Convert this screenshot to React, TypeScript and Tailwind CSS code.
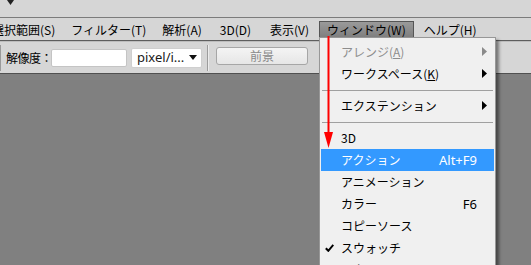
import React from 'react';

type Item =
  | { kind: 'sep' }
  | { kind: 'item'; label: React.ReactNode; shortcut?: string; sub?: boolean; disabled?: boolean; active?: boolean; checked?: boolean };

const menuBar = [
  { label: '選択範囲(S)', cls: '' },
  { label: 'フィルター(T)', cls: '' },
  { label: '解析(A)', cls: '' },
  { label: '3D(D)', cls: 'ml-[2px]' },
  { label: '表示(V)', cls: 'ml-[3px]' },
  { label: 'ウィンドウ(W)', cls: '' },
  { label: 'ヘルプ(H)', cls: '' },
];

const items: Item[] = [
  { kind: 'item', label: <>アレンジ(<span className="underline">A</span>)</>, sub: true, disabled: true },
  { kind: 'item', label: <>ワークスペース(<span className="underline">K</span>)</>, sub: true },
  { kind: 'sep' },
  { kind: 'item', label: 'エクステンション', sub: true },
  { kind: 'sep' },
  { kind: 'item', label: '3D' },
  { kind: 'item', label: 'アクション', shortcut: 'Alt+F9', active: true },
  { kind: 'item', label: 'アニメーション' },
  { kind: 'item', label: 'カラー', shortcut: 'F6' },
  { kind: 'item', label: 'コピーソース' },
  { kind: 'item', label: 'スウォッチ', checked: true },
  { kind: 'item', label: 'スタイル' },
];

function SubArrow({ gray }: { gray?: boolean }) {
  return (
    <svg width="5" height="9" viewBox="0 0 5 9" className="absolute right-[7px] top-[6px]">
      <path d="M0 0 L5 4.5 L0 9 Z" fill={gray ? '#8a8a8a' : '#000'} />
    </svg>
  );
}

export default function App() {
  return (
    <div
      className="relative w-[531px] h-[265px] overflow-hidden bg-[#808080] text-[12px] text-black"
      style={{ fontFamily: '"Noto Sans CJK JP", "Noto Sans", sans-serif' }}
    >
      {/* title strip */}
      <div className="h-[17px] bg-[#d6d6d6] relative">
        <svg width="7" height="5" viewBox="0 0 7 5" className="absolute left-[7px] top-0">
          <path d="M0 0 L7 0 L3.5 5 Z" fill="#222" />
        </svg>
      </div>
      <div className="h-px bg-[#7c7c7c]" />

      {/* menu bar */}
      <div className="h-[22px] bg-[#d6d6d6] flex items-center">
        <div className="flex items-center -ml-[14px] gap-[4px]">
          {menuBar.map((m) => (
            <div
              key={m.label}
              className={
                m.label === 'ウィンドウ(W)'
                  ? 'h-[18px] mt-[2px] px-[7px] flex items-center border border-[#555] bg-gradient-to-b from-[#9a9a9a] to-[#7e7e7e] text-black leading-none'
                  : 'h-[18px] mt-[2px] px-[6px] flex items-center leading-none ' + m.cls
              }
            >
              {m.label}
            </div>
          ))}
        </div>
      </div>
      <div className="h-px bg-[#5e5e5e]" />

      {/* option toolbar */}
      <div className="h-[32px] bg-[#d6d6d6] border-t border-[#bdbdbd] flex items-center relative">
        <div className="w-px h-[26px] bg-[#9a9a9a]" />
        <span className="ml-[5px] leading-none tracking-[-0.5px]">解像度：</span>
        <div className="-ml-[1px] w-[76px] h-[18px] bg-white border border-[#c4c4c4] rounded-[2px]" />
        <div className="ml-[4px] w-[71px] h-[20px] bg-white border border-[#cfcfcf] rounded-[2px] flex items-center pl-[5px] pr-[4px] justify-between">
          <span className="leading-none text-[13px] text-[#1a1a1a]" style={{ fontFamily: '"Noto Sans", sans-serif' }}>pixel/i...</span>
          <svg width="8" height="5" viewBox="0 0 8 5">
            <path d="M0 0 L8 0 L4 5 Z" fill="#111" />
          </svg>
        </div>
        <div className="ml-[5px] w-px h-[26px] bg-[#9c9c9c]" />
        <div className="w-px h-[26px] bg-[#ececec]" />
        <div className="ml-[7px] w-[92px] h-[18px] -mt-[3px] border border-[#a6a6a6] rounded-[3px] bg-gradient-to-b from-[#f4f4f4] to-[#e6e6e6] flex items-center justify-center text-[#8a8a8a] leading-none">
          前景
        </div>
      </div>
      <div className="h-px bg-[#505050]" />

      {/* Window menu dropdown */}
      <div className="absolute left-[319px] top-[37px] w-[177px] h-[240px] bg-[#f0f0f0] border border-[#979797] shadow-[3px_3px_3px_rgba(0,0,0,0.45)] p-px pt-[3px]">
        {items.map((it, i) =>
          it.kind === 'sep' ? (
            <div key={i} className="h-[10px] flex items-center px-[1px]">
              <div className="h-px w-full bg-[#a0a0a0]" />
            </div>
          ) : (
            <div
              key={i}
              className={
                'relative h-[22px] flex items-center pl-[20px] pr-[17px] ' +
                (it.active ? 'bg-[#3399ff] text-white' : it.disabled ? 'text-[#8d8d8d]' : 'text-black')
              }
            >
              {it.checked && (
                <svg width="9" height="8" viewBox="0 0 9 8" className="absolute left-[4px] top-[7px]">
                  <path d="M0.8 4.2 L3.3 6.8 L8.3 0.8" stroke="#000" strokeWidth="2" fill="none" />
                </svg>
              )}
              <span className="leading-none">{it.label}</span>
              {it.shortcut && <span className="ml-auto leading-none text-[13px]" style={{ fontFamily: '"Noto Sans", sans-serif' }}>{it.shortcut}</span>}
              {it.sub && <SubArrow gray={it.disabled} />}
            </div>
          )
        )}
      </div>

      {/* red annotation arrow */}
      <svg width="12" height="114" viewBox="0 0 12 114" className="absolute left-[323px] top-[36px]">
        <line x1="5.5" y1="0" x2="5.5" y2="98" stroke="#ff0000" strokeWidth="2" />
        <path d="M1 96 L10 96 L5.5 112 Z" fill="#ff0000" />
      </svg>
    </div>
  );
}
